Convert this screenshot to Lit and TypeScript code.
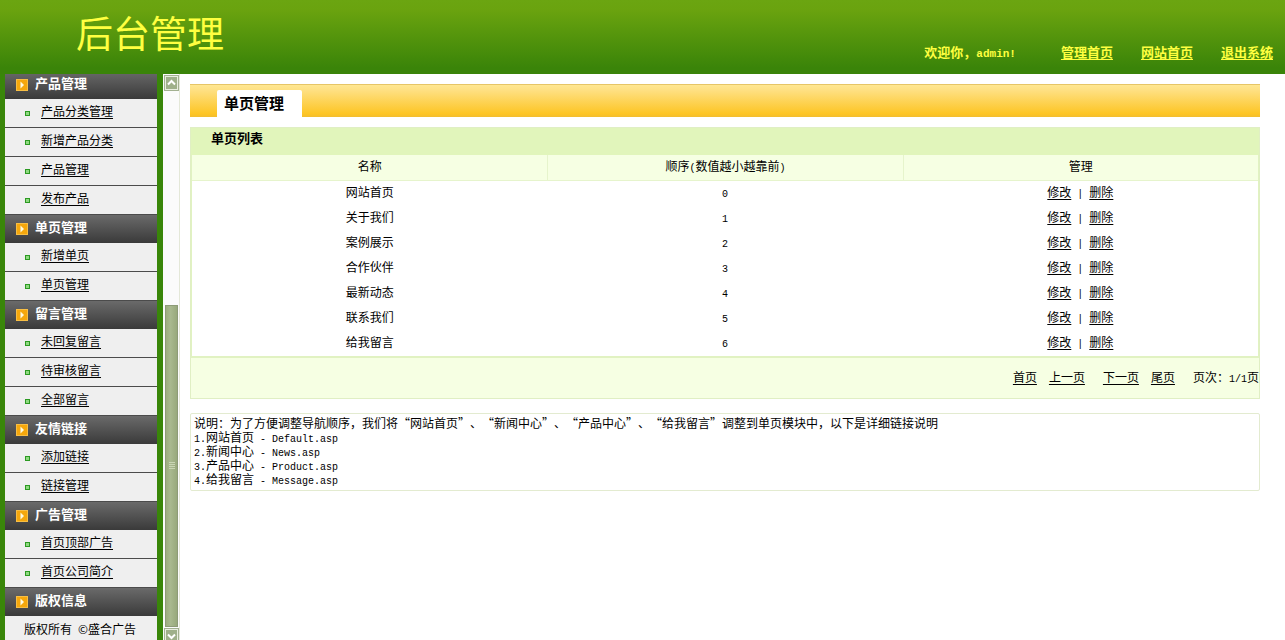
import { LitElement, html, css, svg } from "lit";
import { customElement } from "lit/decorators.js";

interface MenuGroup {
  title: string;
  items: string[];
}

const MENU: MenuGroup[] = [
  { title: "产品管理", items: ["产品分类管理", "新增产品分类", "产品管理", "发布产品"] },
  { title: "单页管理", items: ["新增单页", "单页管理"] },
  { title: "留言管理", items: ["未回复留言", "待审核留言", "全部留言"] },
  { title: "友情链接", items: ["添加链接", "链接管理"] },
  { title: "广告管理", items: ["首页顶部广告", "首页公司简介"] },
  { title: "版权信息", items: [] },
];

const PAGES = ["网站首页", "关于我们", "案例展示", "合作伙伴", "最新动态", "联系我们", "给我留言"];

const NOTES: [string, string][] = [
  ["网站首页", "Default.asp"],
  ["新闻中心", "News.asp"],
  ["产品中心", "Product.asp"],
  ["给我留言", "Message.asp"],
];

const base = css`
  :host {
    font: 12px/14px "Noto Sans CJK SC", sans-serif;
    color: #000;
    text-spacing-trim: space-all;
    text-autospace: no-autospace;
  }
  * {
    box-sizing: border-box;
  }
  a {
    color: inherit;
    text-decoration: underline 1px;
    text-underline-offset: 2px;
    text-decoration-skip-ink: none;
  }
  .latin {
    font-family: "Liberation Mono", monospace;
    font-size: 10px;
    line-height: 8px;
    white-space: pre;
  }
`;

@customElement("top-bar")
export class TopBar extends LitElement {
  static styles = [
    base,
    css`
      :host {
        display: block;
      }
      header {
        display: flex;
        align-items: flex-start;
        justify-content: space-between;
        height: 74px;
        padding: 0 12px 0 76px;
        background: linear-gradient(#6ba511, #6aa30f 10px, #3a8409 68px, #3a8409);
        color: #ffff40;
      }
      h1 {
        margin: 12px 0 0;
        font-size: 37px;
        line-height: 40px;
        font-weight: 400;
      }
      nav {
        display: flex;
        gap: 28px;
        margin-top: 44px;
        font-size: 13px;
        line-height: 16px;
        font-weight: 700;
        white-space: nowrap;
      }
      .welcome {
        margin-right: 17px;
      }
      .user {
        font-family: "Liberation Mono", monospace;
        font-size: 11px;
        line-height: 8px;
      }
    `,
  ];

  render() {
    return html`
      <header>
        <h1>后台管理</h1>
        <nav>
          <span class="welcome">欢迎你，<span class="user">admin!</span></span>
          <a href="#home">管理首页</a>
          <a href="#site">网站首页</a>
          <a href="#logout">退出系统</a>
        </nav>
      </header>
    `;
  }
}

@customElement("side-menu")
export class SideMenu extends LitElement {
  static styles = [
    base,
    css`
      :host {
        display: flex;
        overflow: hidden;
        background: #398609;
      }
      .menu {
        flex: none;
        width: 152px;
        margin: -3px 6px 0 5px;
        background: #efefef;
      }
      h2 {
        display: flex;
        align-items: flex-start;
        gap: 7px;
        height: 28px;
        margin: 0;
        padding: 5px 0 0 11px;
        background: linear-gradient(#6a6a6a, #3a3a3a);
        color: #fff;
        font-size: 13px;
        line-height: 14px;
        font-weight: 700;
      }
      .arrow {
        flex: none;
        margin-top: 3px;
      }
      ul {
        margin: 0;
        padding: 0;
        list-style: none;
      }
      li {
        display: flex;
        align-items: flex-start;
        gap: 11px;
        height: 29px;
        padding: 5px 0 0 20px;
        border-bottom: 1px solid #4b4b4b;
      }
      .dot {
        flex: none;
        width: 5px;
        height: 5px;
        margin-top: 7px;
        border: 1px solid #2c9a22;
        background: #8fd880;
      }
      .copyright {
        margin: 0;
        padding: 6px 0 8px 19px;
      }
      .scroll {
        display: flex;
        flex-direction: column;
        flex: none;
        align-items: stretch;
        width: 17px;
        padding: 1px 1px 0;
        background: #fbfbfb;
        border-right: 1px solid #e4e8d8;
      }
      .step {
        flex: none;
        display: block;
        height: 16px;
        padding: 0;
        border: 0;
        background: none;
      }
      .step svg {
        display: block;
      }
      .step.down {
        margin-bottom: -4px;
      }
      .gap {
        flex: 215;
      }
      .thumb {
        flex: 322;
        display: flex;
        align-items: center;
        justify-content: center;
        margin: 0 0 1px 1px;
        border: 1px solid #8d9b77;
        background: linear-gradient(90deg, #9cad80, #a9b98f 40%, #98a97c);
      }
      .grip {
        width: 6px;
        height: 8px;
        background: repeating-linear-gradient(#c9d5b4 0 1px, transparent 1px 2px);
      }
    `,
  ];

  private step(down: boolean) {
    return html`
      <button class="step ${down ? "down" : ""}" aria-label=${down ? "向下滚动" : "向上滚动"}>
        <svg width="15" height="16" viewBox="0 0 15 16">
          <rect x=".5" y=".5" width="14" height="15" fill="#e9eee0" stroke="#a3b191" />
          <rect x="2" y="2" width="11" height="12" fill="#9fb08a" />
          ${svg`<path d=${down ? "M4 6.5l3.5 3.5 3.5-3.5" : "M4 9.5l3.5-3.5 3.5 3.5"} fill="none" stroke="#fff" stroke-width="2" />`}
        </svg>
      </button>
    `;
  }

  render() {
    return html`
      <nav class="menu">
        ${MENU.map(
          (group) => html`
            <h2>
              <svg class="arrow" width="12" height="12" viewBox="0 0 12 12">
                <rect width="12" height="12" fill="#f5a70c" />
                <rect x=".5" y=".5" width="11" height="11" fill="none" stroke="#f7be45" />
                <path d="M4.500 2.500v7l3.500-3.500z" fill="#fffbe0" />
              </svg>
              ${group.title}
            </h2>
            <ul>
              ${group.items.map((item) => html`<li><span class="dot"></span><a href="#menu">${item}</a></li>`)}
            </ul>
          `
        )}
        <p class="copyright">版权所有<span class="latin"> </span>©盛合广告</p>
      </nav>
      <div class="scroll">
        ${this.step(false)}
        <div class="gap"></div>
        <div class="thumb"><span class="grip"></span></div>
        ${this.step(true)}
      </div>
    `;
  }
}

@customElement("page-list")
export class PageList extends LitElement {
  static styles = [
    base,
    css`
      :host {
        display: block;
        padding: 10px 25px 10px 10px;
      }
      .tabs {
        display: flex;
        align-items: flex-end;
        height: 33px;
        padding-left: 27px;
        border-top: 1px solid #e6c566;
        background: linear-gradient(#ffe791, #fee083 5px, #fdc524 29px, #f2bd30);
      }
      .tab {
        height: 27px;
        margin: 0;
        padding: 4px 18px 0 7px;
        border-radius: 2px 2px 0 0;
        background: #fff;
        font-size: 15px;
        line-height: 17px;
        font-weight: 700;
      }
      .panel {
        margin-top: 10px;
        border: 1px solid #e0efc4;
        background: #f6ffe3;
      }
      h2 {
        height: 27px;
        margin: 0;
        padding: 3px 20px;
        background: #e1f5bb;
        font-size: 13px;
        line-height: 14px;
        font-weight: 700;
      }
      table {
        width: 100%;
        table-layout: fixed;
        border-collapse: separate;
        border-spacing: 0;
        border: solid #e1f2c2;
        border-width: 0 1px 2px;
        background: #fff;
        text-align: center;
      }
      th {
        height: 26px;
        padding: 0 0 4px;
        border-bottom: 1px solid #e6f4cc;
        background: #f6ffe3;
        font-weight: 400;
      }
      th + th {
        border-left: 1px solid #e6f4cc;
      }
      td {
        height: 25px;
        padding: 0 0 3px;
      }
      .pager {
        display: flex;
        justify-content: flex-end;
        gap: 12px;
        padding: 12px 0 14px;
      }
      .wide {
        margin-left: 6px;
      }
      .notes {
        margin-top: 14px;
        padding: 2px 3px 4px;
        border: 1px solid #e3ebd0;
        border-radius: 2px;
      }
      .notes p {
        margin: 0;
      }
    `,
  ];

  render() {
    return html`
      <div class="tabs"><h1 class="tab">单页管理</h1></div>
      <section class="panel">
        <h2>单页列表</h2>
        <table>
          <thead>
            <tr>
              <th>名称</th>
              <th>顺序<span class="latin">(</span>数值越小越靠前<span class="latin">)</span></th>
              <th>管理</th>
            </tr>
          </thead>
          <tbody>
            ${PAGES.map(
              (name, i) => html`
                <tr>
                  <td>${name}</td>
                  <td><span class="latin">${i}</span></td>
                  <td>
                    <a href="#edit">修改</a><span class="latin"> | </span><a href="#delete">删除</a>
                  </td>
                </tr>
              `
            )}
          </tbody>
        </table>
        <nav class="pager">
          <a href="#first">首页</a>
          <a href="#prev">上一页</a>
          <a class="wide" href="#next">下一页</a>
          <a href="#last">尾页</a>
          <span class="wide">页次：<span class="latin">1/1</span>页</span>
        </nav>
      </section>
      <section class="notes">
        <p>说明：为了方便调整导航顺序，我们将“网站首页”、“新闻中心”、“产品中心”、“给我留言”调整到单页模块中，以下是详细链接说明</p>
        ${NOTES.map(
          ([name, file], i) =>
            html`<p><span class="latin">${i + 1}.</span>${name}<span class="latin"> - ${file}</span></p>`
        )}
      </section>
    `;
  }
}

@customElement("app-root")
export class AppRoot extends LitElement {
  static styles = css`
    :host {
      display: flex;
      flex-direction: column;
      height: 100vh;
      overflow: hidden;
      background: #fff;
    }
    .body {
      display: flex;
      flex: 1;
      min-height: 0;
    }
    side-menu {
      flex: none;
    }
    page-list {
      flex: 1;
      min-width: 0;
    }
  `;

  render() {
    return html`
      <top-bar lang="zh-CN"></top-bar>
      <div class="body">
        <side-menu lang="zh-CN"></side-menu>
        <page-list lang="zh-CN"></page-list>
      </div>
    `;
  }
}
